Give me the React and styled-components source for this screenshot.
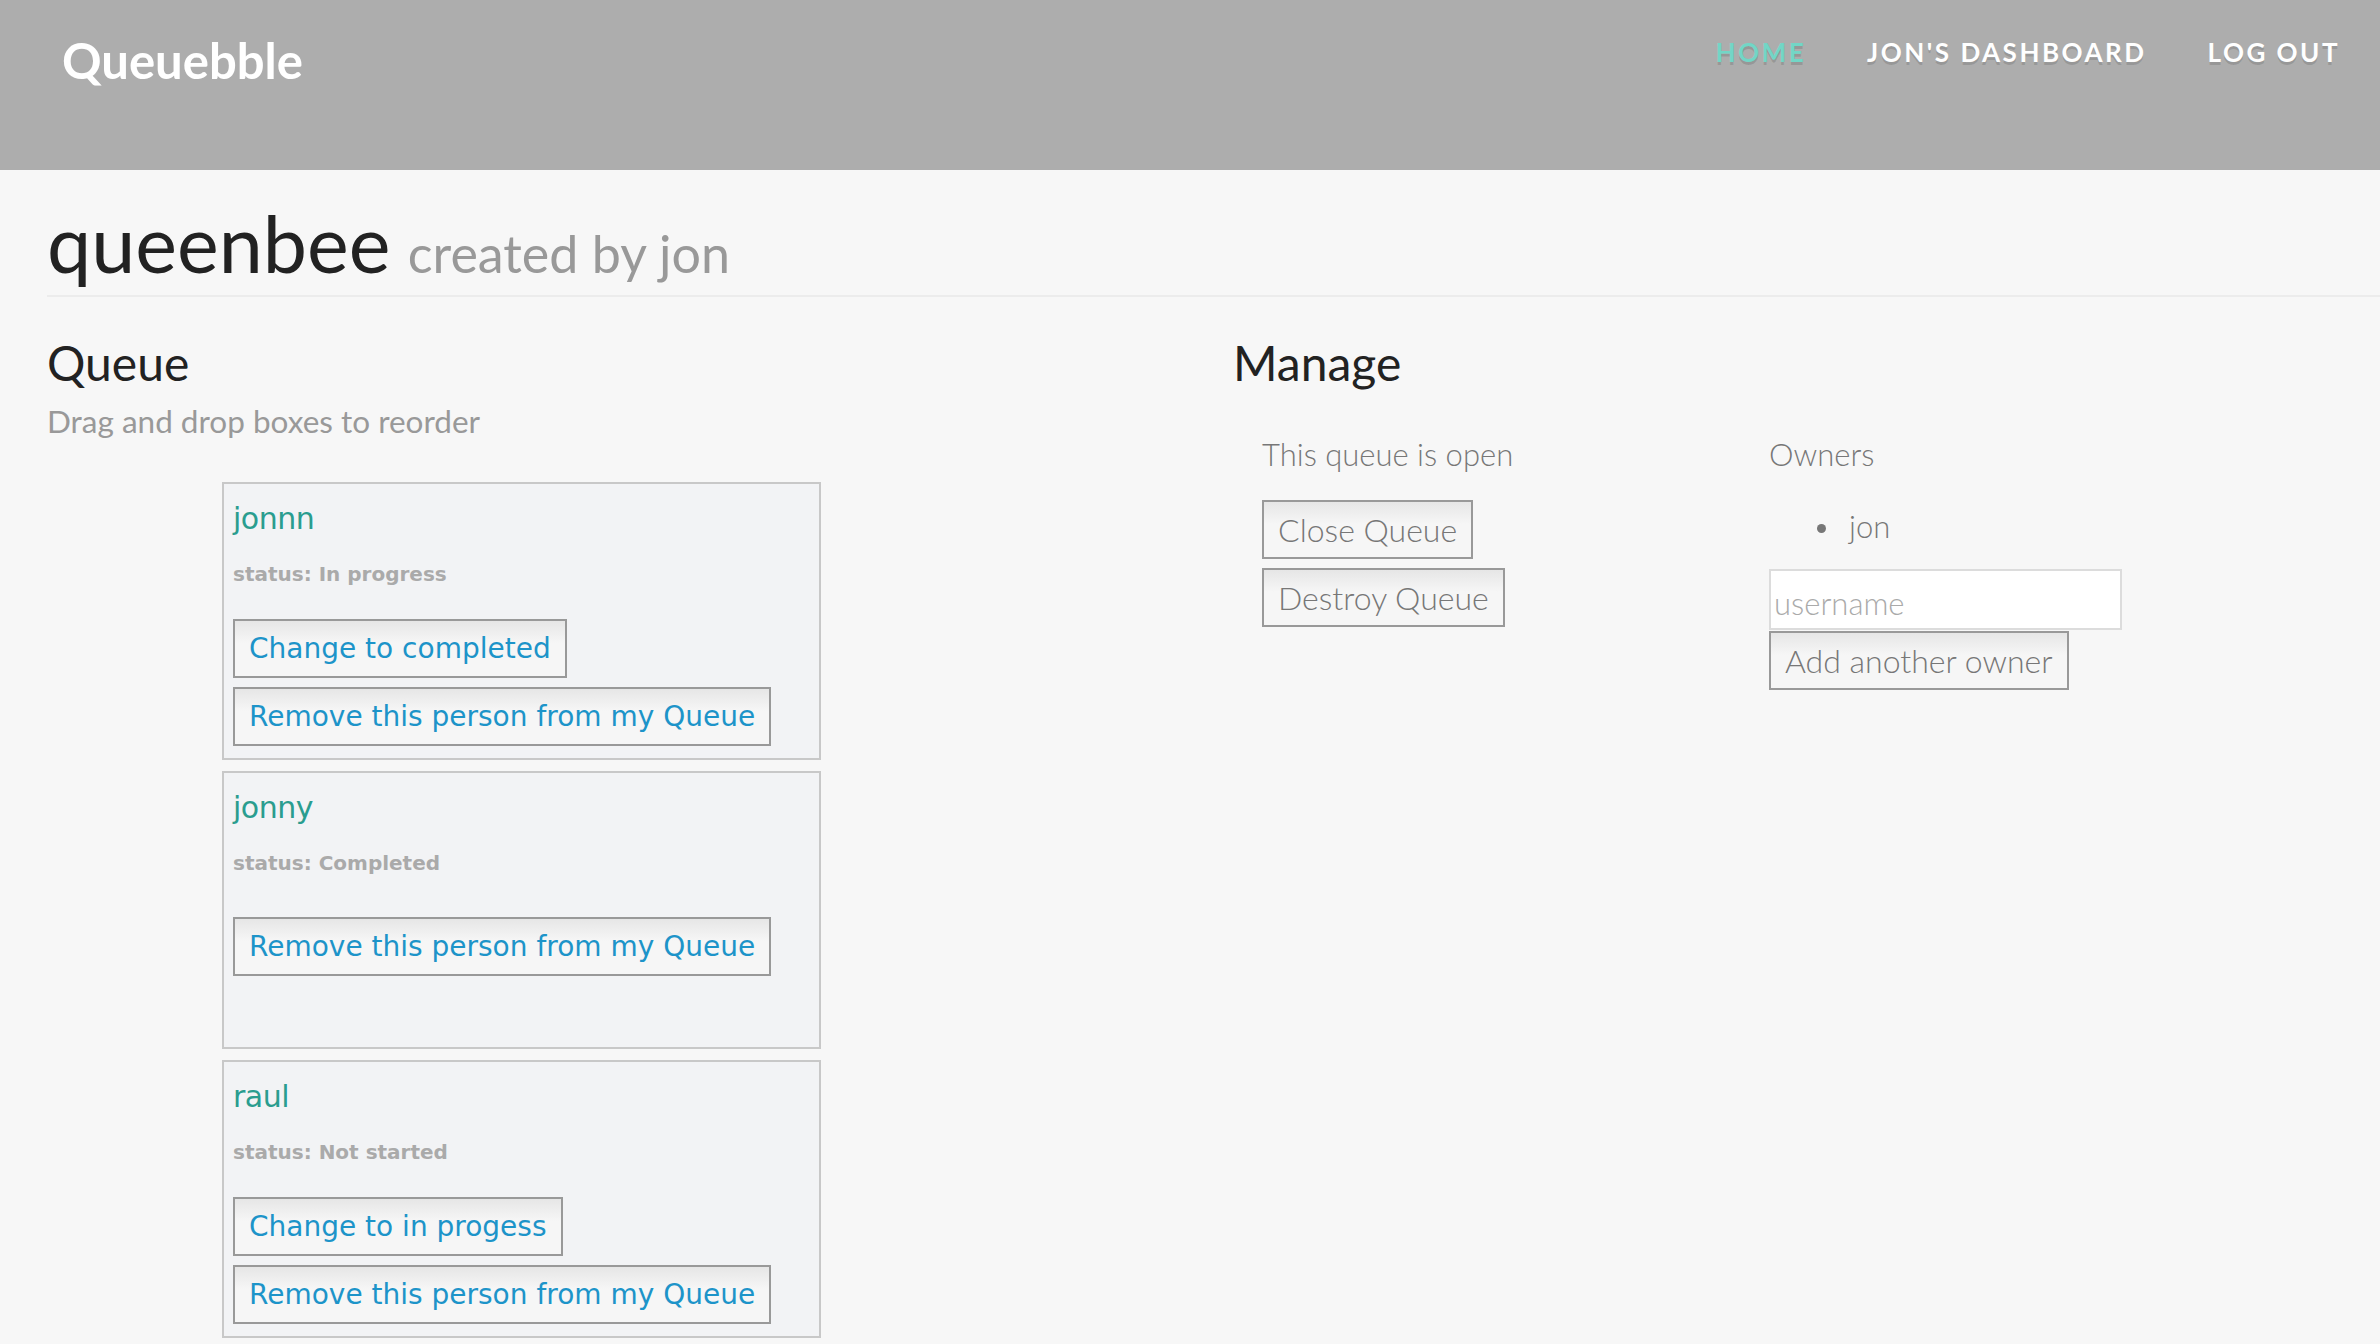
import React from "react";
import styled, { createGlobalStyle } from "styled-components";

const GlobalStyle = createGlobalStyle`
  body {
    margin: 0;
    background: #f7f7f7;
    font-family: Lato, "Liberation Sans", sans-serif;
  }
`;

const queue = [
  { name: "jonnn", status: "In progress", change: "Change to completed" },
  { name: "jonny", status: "Completed", change: null },
  { name: "raul", status: "Not started", change: "Change to in progess" },
];

const App = () => {
  return (
    <>
      <GlobalStyle />
      <Header>
        <Logo>Queuebble</Logo>
        <Nav>
          <NavLink active>Home</NavLink>
          <NavLink>Jon's Dashboard</NavLink>
          <NavLink>Log out</NavLink>
        </Nav>
      </Header>
      <Main>
        <PageHeader>
          queenbee <small>created by jon</small>
        </PageHeader>
        <Columns>
          <section>
            <SectionTitle>Queue</SectionTitle>
            <Hint>Drag and drop boxes to reorder</Hint>
            <CardList>
              {queue.map((p) => (
                <Card key={p.name}>
                  <Name>{p.name}</Name>
                  <Status>status: {p.status}</Status>
                  <Actions spaced={!p.change}>
                    {p.change && <BlueButton>{p.change}</BlueButton>}
                    <BlueButton>Remove this person from my Queue</BlueButton>
                  </Actions>
                </Card>
              ))}
            </CardList>
          </section>
          <section>
            <SectionTitle>Manage</SectionTitle>
            <ManageRow>
              <div>
                <Label>This queue is open</Label>
                <Stack>
                  <GreyButton>Close Queue</GreyButton>
                  <GreyButton>Destroy Queue</GreyButton>
                </Stack>
              </div>
              <div>
                <Label>Owners</Label>
                <Owners>
                  <li>jon</li>
                </Owners>
                <Stack tight>
                  <UserInput placeholder="username" />
                  <GreyButton>Add another owner</GreyButton>
                </Stack>
              </div>
            </ManageRow>
          </section>
        </Columns>
      </Main>
    </>
  );
};
export default App;

const Header = styled.header`
  display: flex;
  justify-content: space-between;
  align-items: flex-start;
  height: 170px;
  padding: 0 40px 0 62px;
  box-sizing: border-box;
  background: #adadad;
`;

const Logo = styled.div`
  margin-top: 36px;
  font-size: 49px;
  line-height: 1;
  font-weight: 700;
  color: #fff;
`;

const Nav = styled.nav`
  display: flex;
  gap: 61px;
  margin-top: 39px;
`;

const NavLink = styled.a`
  font-size: 26px;
  line-height: 1;
  font-weight: 700;
  letter-spacing: 2.5px;
  text-transform: uppercase;
  color: ${(p) => (p.active ? "#72d6c6" : "#fff")};
  text-shadow: 0 3px 0 rgba(0, 0, 0, 0.12);
  cursor: pointer;
`;

const Main = styled.main`
  padding-left: 47px;
`;

const PageHeader = styled.h1`
  margin: 30px 0 0;
  padding-bottom: 8px;
  border-bottom: 2px solid #ececec;
  font-size: 79px;
  line-height: 1.1;
  font-weight: 400;
  color: #222;

  small {
    font-size: 52px;
    color: #999;
    margin-left: -3px;
  }
`;

const Columns = styled.div`
  display: grid;
  grid-template-columns: 1186px 1fr;
  margin-top: 40px;
`;

const SectionTitle = styled.h2`
  margin: 0;
  font-size: 48px;
  line-height: 1.1;
  font-weight: 400;
  color: #222;
`;

const Hint = styled.p`
  margin: 13px 0 0;
  font-size: 31.5px;
  line-height: 36px;
  color: #999;
`;

const CardList = styled.div`
  display: flex;
  flex-direction: column;
  gap: 11px;
  margin: 43px 0 0 175px;
`;

const Card = styled.div`
  width: 599px;
  height: 278px;
  box-sizing: border-box;
  border: 2px solid #c8c8c8;
  background: #f2f3f5;
  padding: 0 9px;
  font-family: "DejaVu Sans", Verdana, sans-serif;
`;

const Name = styled.div`
  margin-top: 17px;
  font-size: 30px;
  line-height: 36px;
  color: #2a9d8f;
  letter-spacing: -0.5px;
`;

const Status = styled.div`
  margin-top: 26px;
  font-size: 20px;
  line-height: 22px;
  font-weight: 700;
  color: #aaa;
`;

const Actions = styled.div`
  display: flex;
  flex-direction: column;
  align-items: flex-start;
  gap: 9px;
  margin-top: ${(p) => (p.spaced ? "43px" : "34px")};
`;

const BlueButton = styled.button`
  height: 59px;
  padding: 0 14px;
  border: 2px solid #999;
  background: linear-gradient(#e6e6e6, #f6f6f6 40%, #f6f6f6);
  font-family: "DejaVu Sans", Verdana, sans-serif;
  font-size: 28px;
  color: #1d94c9;
  cursor: pointer;
`;

const ManageRow = styled.div`
  display: grid;
  grid-template-columns: 507px 507px;
  padding-left: 29px;
  margin-top: 46px;
`;

const Label = styled.p`
  margin: 0;
  font-size: 31px;
  line-height: 1.2;
  font-weight: 300;
  color: #777;
`;

const Stack = styled.div`
  display: flex;
  flex-direction: column;
  align-items: flex-start;
  gap: ${(p) => (p.tight ? "1px" : "9px")};
  margin-top: ${(p) => (p.tight ? "0" : "27px")};
`;

const GreyButton = styled.button`
  height: 59px;
  padding: 0 14px;
  border: 2px solid #999;
  background: linear-gradient(#e6e6e6, #f6f6f6 40%, #f6f6f6);
  font-family: Lato, sans-serif;
  font-size: 32px;
  font-weight: 300;
  color: #777;
  cursor: pointer;
`;

const Owners = styled.ul`
  margin: 35px 0 24px;
  padding-left: 48px;
  list-style: none;
  font-size: 31px;
  line-height: 1.2;
  font-weight: 300;
  color: #777;

  li::before {
    content: "";
    display: inline-block;
    width: 9px;
    height: 9px;
    margin-right: 23px;
    border-radius: 50%;
    background: #777;
    vertical-align: 5px;
  }
`;

const UserInput = styled.input`
  width: 353px;
  height: 61px;
  box-sizing: border-box;
  padding: 6px 3px 0;
  border: 2px solid #dcdcdc;
  background: #fff;
  font-family: Lato, sans-serif;
  font-size: 31px;
  font-weight: 300;
  color: #555;
  outline: none;

  &::placeholder {
    color: #aaa;
  }
`;
